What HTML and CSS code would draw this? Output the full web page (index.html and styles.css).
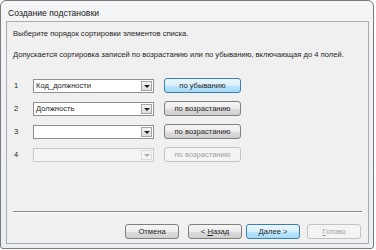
FILE: index.html
```html
<!DOCTYPE html>
<html lang="ru">
<head>
  <meta charset="UTF-8" />
  <title>Создание подстановки</title>
  <link rel="stylesheet" href="styles.css">
</head>
<body>
  <div class="window">
    <div class="title">Создание подстановки</div>
    <div class="client">
      <p class="intro">Выберите порядок сортировки элементов списка.</p>
      <p class="note">Допускается сортировка записей по возрастанию или по убыванию, включающая до 4 полей.</p>

      <div class="rows">
        <div class="row">
          <span class="num">1</span>
          <div class="combo"><span class="value">Код_должности</span><span class="drop"></span></div>
          <button class="btn focus">по убыванию</button>
        </div>
        <div class="row">
          <span class="num">2</span>
          <div class="combo"><span class="value">Должность</span><span class="drop"></span></div>
          <button class="btn">по возрастанию</button>
        </div>
        <div class="row">
          <span class="num">3</span>
          <div class="combo"><span class="value"></span><span class="drop"></span></div>
          <button class="btn">по возрастанию</button>
        </div>
        <div class="row off">
          <span class="num">4</span>
          <div class="combo"><span class="value"></span><span class="drop"></span></div>
          <button class="btn" disabled>по возрастанию</button>
        </div>
      </div>

      <div class="footer">
        <button class="btn wide cancel">Отмена</button>
        <button class="btn wide back">&lt; <u>Н</u>азад</button>
        <button class="btn wide next focus"><u>Д</u>алее &gt;</button>
        <button class="btn wide" disabled><u>Г</u>отово</button>
      </div>
    </div>
  </div>
</body>
</html>
```

FILE: styles.css
```css
* {
  box-sizing: border-box;
}

body {
  margin: 0;
  background: #ffffff;
  font-family: "Liberation Sans", Arial, sans-serif;
  font-size: 7.6px;
  color: #1e1e1e;
}

.window {
  width: 374px;
  height: 249px;
  border: 1px solid #7a7a7a;
  border-radius: 6px 6px 3px 3px;
  background: linear-gradient(#f3f5f7, #eceff2);
  display: flex;
  flex-direction: column;
}

.title {
  height: 20px;
  padding: 7px 0 0 7px;
  font-size: 8.6px;
  color: #1a1a1a;
}

.client {
  flex: 1;
  margin: 0 4px 4px 5px;
  border: 1px solid #a9abae;
  background: #f0f0f0;
  padding: 7px 6px 0 6px;
  display: flex;
  flex-direction: column;
}

.intro {
  margin: 0;
  height: 21px;
}

.note {
  margin: 0;
  height: 28px;
}

.rows {
  display: flex;
  flex-direction: column;
  gap: 8px;
  padding-left: 1px;
}

.row {
  display: flex;
  align-items: center;
  height: 15px;
}

.num {
  width: 19px;
}

.combo {
  width: 121px;
  height: 14px;
  border: 1px solid #8e8f8f;
  background: #ffffff;
  display: flex;
  align-items: center;
  padding: 0 0 0 2px;
}

.combo .value {
  flex: 1;
}

.drop {
  width: 11px;
  height: 10px;
  margin-right: 1px;
  border: 1px solid #a5a5a5;
  background: linear-gradient(#f4f4f4, #dcdcdc);
  position: relative;
}

.drop::after {
  content: "";
  position: absolute;
  left: 2px;
  top: 3px;
  border-left: 3px solid transparent;
  border-right: 3px solid transparent;
  border-top: 3px solid #222222;
}

.row .btn {
  margin-left: 10px;
  width: 77px;
  height: 15px;
}

.btn {
  font-family: "Liberation Sans", Arial, sans-serif;
  font-size: 7.6px;
  color: #1e1e1e;
  padding: 0;
  border: 1px solid #7f7f7f;
  border-radius: 3px;
  background: linear-gradient(#f6f6f6 0%, #ebebeb 50%, #dddddd 51%, #cfcfcf 100%);
}

.btn u {
  text-decoration: underline;
}

.btn.focus {
  border-color: #3c7fb1;
  background: linear-gradient(#eaf6fd 0%, #d9f0fc 50%, #bee6fd 51%, #a7d9f5 100%);
}

.btn:disabled {
  color: #a0a0a0;
  border-color: #c2c2c2;
  background: #f4f4f4;
}

.off .combo {
  border-color: #c9c9c9;
  background: #f4f4f4;
}

.off .drop {
  border-color: #dcdcdc;
  background: #f4f4f4;
}

.off .drop::after {
  border-top-color: #b0b0b0;
}

.footer {
  margin-top: auto;
  border-top: 1px solid #8a8a8a;
  box-shadow: inset 0 1px 0 #ffffff;
  height: 32px;
  display: flex;
  align-items: flex-end;
  justify-content: flex-end;
  padding: 0 1px 4px 0;
}

.btn.wide {
  width: 54px;
  height: 15px;
}

.cancel {
  margin-right: 9px;
}

.back {
  margin-right: 4px;
}

.next {
  margin-right: 7px;
}
```
